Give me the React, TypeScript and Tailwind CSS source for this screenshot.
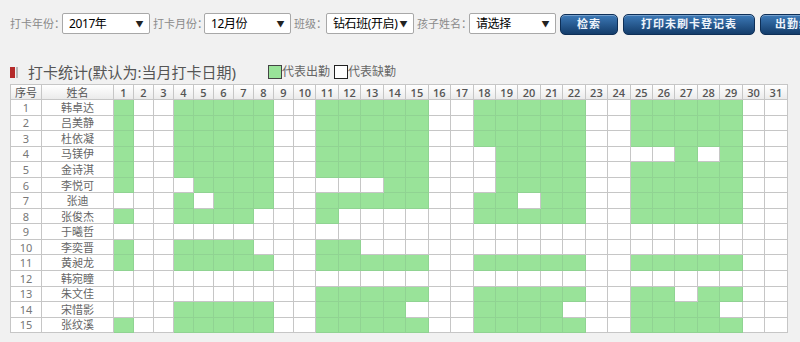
const same = '1,4-8,11-15,18-22,25-29'

const rows: [string, string][] = [
  ['韩卓达', same],
  ['吕美静', same],
  ['杜依凝', same],
  ['马镁伊', '1,4-8,11-15,19-22,27,29'],
  ['金诗淇', '1,4-8,11-15,19-22,25-29'],
  ['李悦可', '1,5-8,14-15,19-22,25-29'],
  ['张迪', '4,6-8,11-15,18-19,21-22,25-29'],
  ['张俊杰', '1,4-7,11,18-22,25-29'],
  ['于曦哲', ''],
  ['李奕晋', '1,4-7,11-12'],
  ['黄昶龙', same],
  ['韩宛瞳', ''],
  ['朱文佳', '11-15,18-22,25-26,28-29'],
  ['宋惜影', '4-8,11-14,18-21,25-28'],
  ['张纹溪', same],
]

// "1,4-8" -> 31 booleans
function parseDays(spec: string) {
  const out: boolean[] = Array(31).fill(false)
  spec.split(',').filter(Boolean).forEach((part) => {
    const [a, b] = part.split('-').map(Number)
    for (let d = a; d <= (b ?? a); d++) out[d - 1] = true
  })
  return out
}

const days = Array.from({ length: 31 }, (_, i) => i + 1)

function FakeSelect({ value, width }: { value: string; width: string }) {
  return (
    <div className={`flex h-[21px] ${width} shrink-0 items-center justify-between rounded-[2px] border border-[#a8a8a8] bg-white pl-[6px] pr-[6px] text-[12px] tracking-[-0.4px] text-black`}>
      <span>{value}</span>
      <span className="text-[8px] text-[#222]">▼</span>
    </div>
  )
}

function Label({ text, width }: { text: string; width: string }) {
  return <span className={`${width} ml-[3px] shrink-0 pt-[3px] text-[11px] text-[#8a8a8a]`}>{text}</span>
}

function Btn({ text, width }: { text: string; width: string }) {
  return (
    <div className={`mt-[1px] flex h-[21px] ${width} shrink-0 items-center justify-center rounded-[5px] border border-[#0e2f57] bg-linear-to-b from-[#3d7ab8] to-[#143d6b] text-[11px] font-bold tracking-[1px] text-[#eef4fb] shadow-[inset_0_1px_0_rgba(255,255,255,0.3)]`}>
      {text}
    </div>
  )
}

export default function App() {
  return (
    <div className="h-[342px] w-[800px] overflow-hidden bg-[#f1f1f1] font-['Noto_Sans','Noto_Sans_CJK_SC',sans-serif]">
      <div className="flex h-[60px] items-start pl-[7px] pt-[13px] whitespace-nowrap">
        <Label text="打卡年份：" width="w-[52px]" />
        <FakeSelect value="2017年" width="w-[88px]" />
        <Label text="打卡月份：" width="w-[51px]" />
        <FakeSelect value="12月份" width="w-[87px]" />
        <Label text="班级：" width="w-[32px]" />
        <FakeSelect value="钻石班(开启)" width="w-[88px]" />
        <Label text="孩子姓名：" width="w-[52px]" />
        <FakeSelect value="请选择" width="w-[87px]" />
        <div className="ml-[4px] flex shrink-0 gap-[5px]">
          <Btn text="检索" width="w-[58px]" />
          <Btn text="打印未刷卡登记表" width="w-[132px]" />
          <Btn text="出勤统计表" width="w-[90px]" />
        </div>
      </div>

      <div className="flex h-[24px] items-center pl-[10px]">
        <span className="h-[11px] w-[5px] bg-[#b52a2a]" />
        <span className="ml-[1px] h-[11px] w-[2px] bg-[#b9b9b9]" />
        <span className="ml-[10px] text-[15px] leading-none text-[#555]">打卡统计(默认为:当月打卡日期)</span>
        <span className="ml-[32px] h-[14px] w-[14px] border border-[#444] bg-[#99e399]" />
        <span className="text-[12px] text-[#666]">代表出勤</span>
        <span className="ml-[4px] h-[14px] w-[14px] border border-[#222] bg-white" />
        <span className="text-[12px] text-[#666]">代表缺勤</span>
      </div>

      <div className="ml-[10px] grid w-max grid-cols-[31px_72px_repeat(9,20px)_repeat(22,22.45px)] grid-rows-[15px_repeat(15,15.55px)] border-l border-t border-[#c6c6c6] text-[11px] leading-none">
        <div className="flex items-center justify-center border-b border-r border-[#c6c6c6] bg-linear-to-b from-white to-[#ebebeb] text-[#555]">序号</div>
        <div className="flex items-center justify-center border-b border-r border-[#c6c6c6] bg-linear-to-b from-white to-[#ebebeb] text-[#555]">姓名</div>
        {days.map((d) => (
          <div key={d} className="flex items-center justify-center border-b border-r border-[#c6c6c6] bg-linear-to-b from-white to-[#ebebeb] font-['Open_Sans',sans-serif] font-semibold text-[#555]">
            {d}
          </div>
        ))}
        {rows.map(([name, spec], i) => (
          <div key={name} className="contents">
            <div className="flex items-center justify-center border-b border-r border-[#c6c6c6] bg-white text-[#777]">{i + 1}</div>
            <div className="flex items-center justify-center border-b border-r border-[#c6c6c6] bg-white text-[#666]">{name}</div>
            {parseDays(spec).map((on, j) => (
              <div
                key={j}
                className={on ? 'border-b border-r border-[#90d392] bg-[#99e399]' : 'border-b border-r border-[#c6c6c6] bg-white'}
              />
            ))}
          </div>
        ))}
      </div>
    </div>
  )
}
